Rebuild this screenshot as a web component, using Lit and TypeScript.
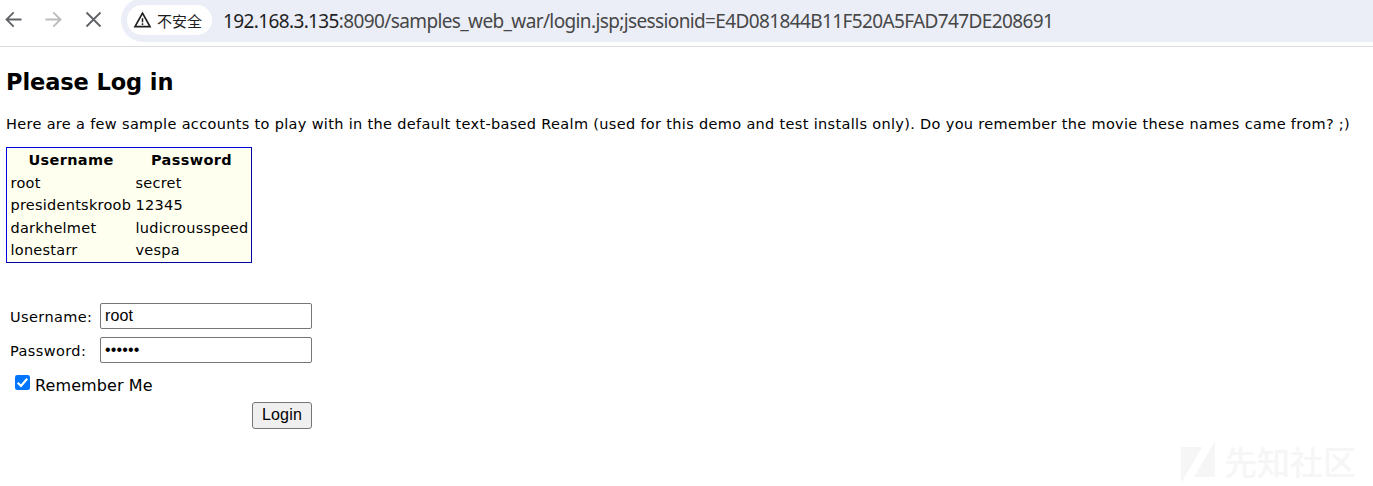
import { LitElement, html, css } from "lit";
import { customElement } from "lit/decorators.js";

const ACCOUNTS = [
  ["root", "secret"],
  ["presidentskroob", "12345"],
  ["darkhelmet", "ludicrousspeed"],
  ["lonestarr", "vespa"],
];

@customElement("browser-bar")
class BrowserBar extends LitElement {
  static styles = css`
    :host { display: flex; height: 46px; border-bottom: 1px solid #dcdcdc; overflow: hidden; background: #fff; }
    .nav { width: 121px; flex: none; display: block; height: 42px; }
    .omni { flex: 1; height: 44px; margin-top: -2px; background: #ebeef7; border-radius: 22px 0 0 22px; display: flex; align-items: center; padding-left: 6px; box-sizing: border-box; }
    .chip { width: 85px; height: 30px; flex: none; border-radius: 15px; background: #fff; display: flex; align-items: center; box-sizing: border-box; padding-left: 6px; gap: 5px; margin-right: 11px; }
    .chip span { font: 15px/30px "Noto Sans CJK SC", sans-serif; color: #1f1f1f; white-space: nowrap; padding-top: 1px; }
    .url { font: 19px/30px "Noto Sans", sans-serif; color: #474747; white-space: nowrap; letter-spacing: -0.625px; padding-top: 1px; }
    .host { color: #1f1f1f; }
  `;
  render() {
    return html`
      <svg class="nav" viewBox="0 0 121 42" fill="none" stroke-width="1.8">
        <path d="M21.5 19.5H7M13.7 12.3L6.5 19.5L13.7 26.7" stroke="#5f6368" />
        <path d="M45.5 19.5H60M53.3 12.3L60.5 19.5L53.3 26.7" stroke="#b9bcb9" />
        <path d="M86.5 12.5L100.5 26.5M100.5 12.5L86.5 26.5" stroke="#5f6368" />
      </svg>
      <div class="omni">
        <div class="chip">
          <svg width="19" height="18" viewBox="0 0 19 18" fill="none" stroke="#1f1f1f">
            <path d="M9.5 2.2L17 15.6H2Z" stroke-width="1.7" />
            <path d="M9.5 7.2V11.2M9.5 12.2V13.9" stroke-width="1.5" />
          </svg>
          <span>不安全</span>
        </div>
        <div class="url"><span class="host">192.168.3.135</span>:8090/samples_web_war/login.jsp;jsessionid=E4D081844B11F520A5FAD747DE208691</div>
      </div>
    `;
  }
}

@customElement("app-root")
class AppRoot extends LitElement {
  static styles = css`
    :host { display: block; height: 486px; overflow: hidden; background: #fff; color: #000; font: 15px/22px Verdana, "DejaVu Sans", sans-serif; position: relative; }
    main { padding: 21px 6px 0; }
    h1 { font-size: 22.5px; line-height: 28px; margin: 0; letter-spacing: -0.1px; white-space: nowrap; }
    p { margin: 17px 0 12px; font-size: 14.5px; white-space: nowrap; letter-spacing: 0.33px; }
    .accounts { width: 246px; height: 116px; box-sizing: border-box; border: 1px solid; border-color: #0000e6 #0000a0 #0000a0 #0000e6; background: #fffff0; display: grid; grid-template-columns: 121px 112px; column-gap: 4px; grid-auto-rows: 22.5px; padding: 1px 3px 1px 3.5px; font-size: 14.5px; line-height: 22.5px; letter-spacing: 0.25px; white-space: nowrap; }
    .accounts b { text-align: center; letter-spacing: 0.35px; }
    form { margin-top: 40px; width: 306px; display: grid; grid-template-columns: 94px 212px; row-gap: 8px; }
    label { font-size: 14.5px; line-height: 28px; padding-left: 4px; height: 26px; letter-spacing: 0.4px; white-space: nowrap; }
    input.field { box-sizing: border-box; width: 212px; height: 26px; border: 1px solid #767676; border-radius: 2px; padding: 0 4px; margin: 0; font: 16px "Liberation Sans", sans-serif; letter-spacing: 0.15px; outline: none; background: #fff; color: #000; }
    .remember { grid-column: 1 / 3; display: flex; align-items: center; height: 24px; padding-left: 9px; gap: 5px; font-size: 16px; letter-spacing: 0.1px; white-space: nowrap; }
    .remember svg { margin-top: -1px; }
    .remember span { padding-top: 5px; }
    button { grid-column: 2; justify-self: end; width: 60px; height: 27px; box-sizing: border-box; border: 1px solid #767676; border-radius: 3px; background: #efefef; color: #000; font: 16px "Liberation Sans", sans-serif; letter-spacing: 0.2px; padding: 0 0 2px; margin-top: -1px; }
    .mark { position: absolute; left: 1181px; top: 440px; display: flex; align-items: center; gap: 9px; color: #f6f6f6; font: 500 33px/44px "Noto Sans CJK SC", sans-serif; white-space: nowrap; }
    .mark span { margin-top: -2px; }
  `;
  render() {
    return html`
      <browser-bar></browser-bar>
      <main>
        <h1>Please Log in</h1>
        <p>Here are a few sample accounts to play with in the default text-based Realm (used for this demo and test installs only). Do you remember the movie these names came from? ;)</p>
        <div class="accounts">
          <b>Username</b><b>Password</b>
          ${ACCOUNTS.map(([name, pass]) => html`<span>${name}</span><span>${pass}</span>`)}
        </div>
        <form>
          <label>Username:</label><input class="field" type="text" value="root" />
          <label>Password:</label><input class="field" type="password" value="secret" />
          <div class="remember">
            <svg width="15" height="15" viewBox="0 0 15 15"><rect width="15" height="15" rx="2.3" fill="#0075ff" /><path d="M2.7 7.8L6 11L12.2 3.7" fill="none" stroke="#fff" stroke-width="2.2" /></svg>
            <span>Remember Me</span>
          </div>
          <button type="button">Login</button>
        </form>
      </main>
      <div class="mark">
        <svg width="34" height="44" viewBox="0 0 34 44" fill="#f6f6f6"><path d="M0 7H21L0 43ZM34 1V37H13Z" /></svg>
        <span>先知社区</span>
      </div>
    `;
  }
}
